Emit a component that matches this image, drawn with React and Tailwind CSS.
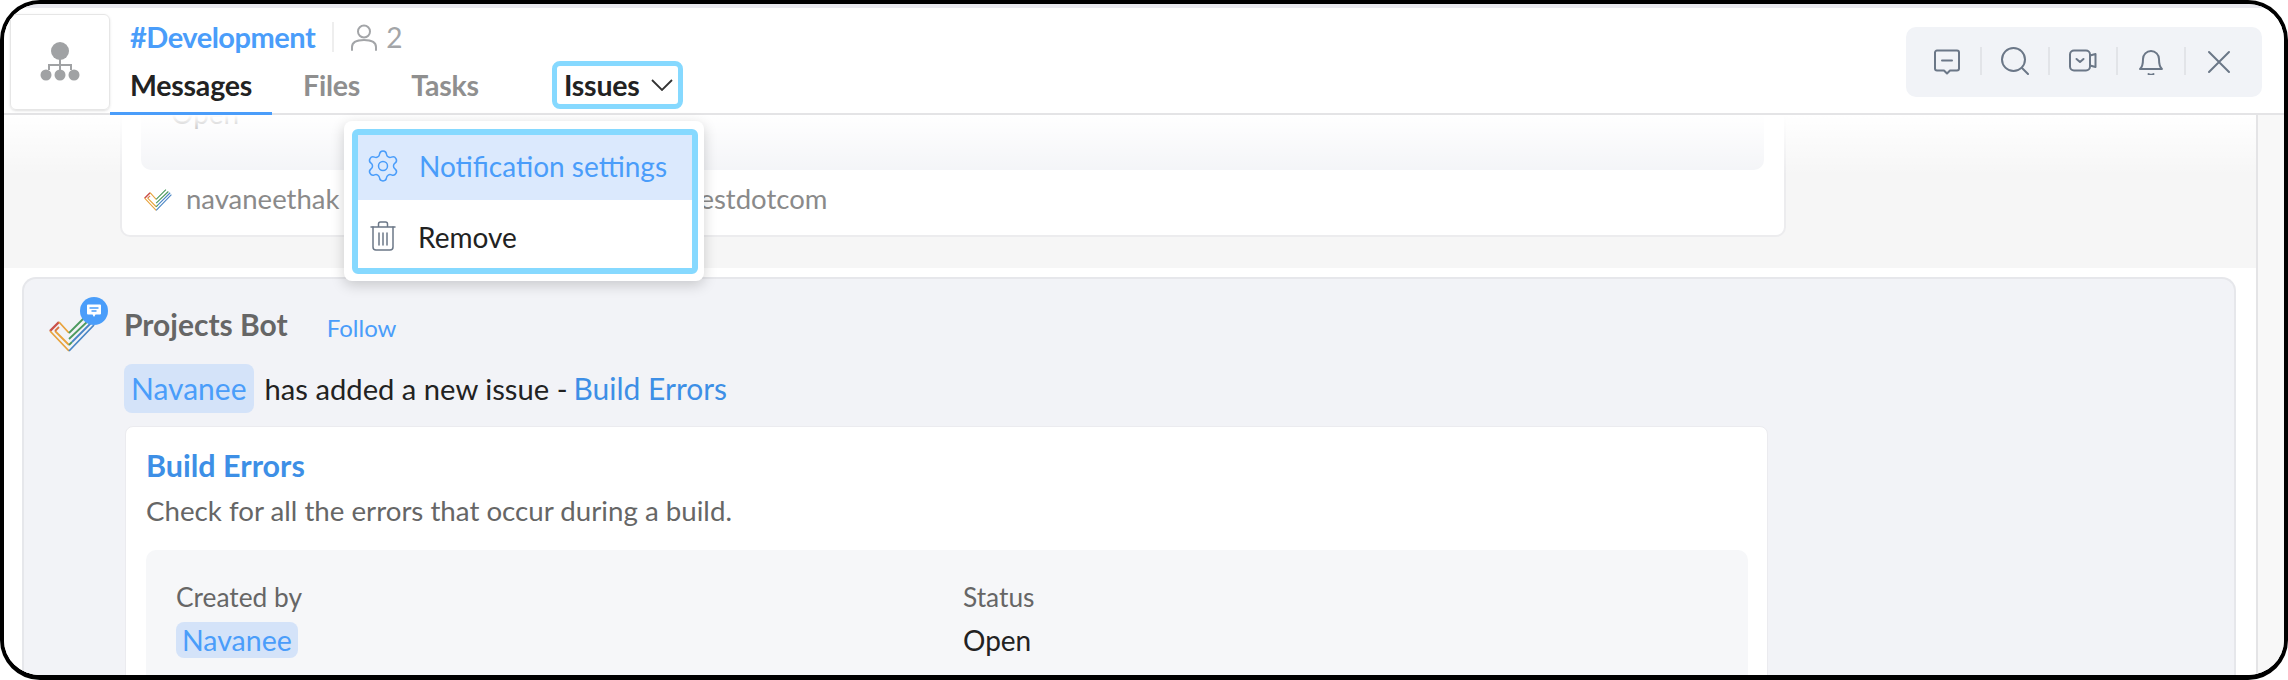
import { Settings } from "lucide-react";

function CheckLogo({ className }) {
  return (
    <svg viewBox="0 0 46 46" fill="none" strokeWidth="1.8" className={className}>
      <path d="M1 25L10 16" stroke="#c9504a" strokeWidth="2.4" />
      <path d="M1 25L20 45M10 16L20 27M6 25L20 39" stroke="#e8a33d" />
      <path d="M6 25L10 21" stroke="#d9763f" />
      <path d="M20 27L36 11M20 33L40 14" stroke="#4c9a5e" />
      <path d="M20 39L23 36" stroke="#4c9a5e" />
      <path d="M20 45L45 19M23 36L43 16" stroke="#4a86c5" />
    </svg>
  );
}

function OrgIcon() {
  return (
    <svg viewBox="0 0 40 40" className="h-[40px] w-[40px]" fill="#a0a2a4">
      <circle cx="20" cy="9" r="9" />
      <path d="M19 16h2v6h11v6h-2v-4H21v4h-2v-4H10v4H8v-6h11z" />
      <circle cx="6" cy="33" r="5.5" />
      <circle cx="20" cy="33" r="5.5" />
      <circle cx="34" cy="33" r="5.5" />
    </svg>
  );
}

const toolIcons = [
  <svg key="chat" viewBox="0 0 28 28" className="h-[28px] w-[28px]" fill="none" stroke="#6b7787" strokeWidth="2" strokeLinejoin="round">
    <path d="M2 5.500a2 2 0 0 1 2-2h20a2 2 0 0 1 2 2v16a2 2 0 0 1-2 2h-7l-3 3-3-3H4a2 2 0 0 1-2-2z" />
    <path d="M9 13.500h10" strokeLinecap="round" />
  </svg>,
  <svg key="search" viewBox="0 0 28 28" className="h-[28px] w-[28px]" fill="none" stroke="#6b7787" strokeWidth="2" strokeLinecap="round">
    <circle cx="12.500" cy="12.500" r="11.500" />
    <path d="M21 21l6 6" />
  </svg>,
  <svg key="video" viewBox="0 0 28 28" className="h-[28px] w-[28px]" fill="none" stroke="#6b7787" strokeWidth="2" strokeLinejoin="round" strokeLinecap="round">
    <rect x="1" y="3.500" width="20" height="20" rx="4" />
    <path d="M21 8.500l5.500-1.500v13l-5.500-1.500" />
    <path d="M7.500 12l3.500 3 3.500-3" />
  </svg>,
  <svg key="bell" viewBox="0 0 28 28" className="h-[28px] w-[28px]" fill="none" stroke="#6b7787" strokeWidth="2" strokeLinejoin="round" strokeLinecap="round">
    <path d="M3 22c2.500-2 3-5 3-10a8 8 0 0 1 16 0c0 5 .5 8 3 10z" />
    <path d="M11.500 27c1.500 1 3.500 1 5 0" />
  </svg>,
  <svg key="close" viewBox="0 0 28 28" className="h-[28px] w-[28px]" fill="none" stroke="#6b7787" strokeWidth="2" strokeLinecap="round">
    <path d="M4 5l20 20M24 5L4 25" />
  </svg>,
];

function Header() {
  return (
    <div className="relative flex h-[107px] items-start border-b-2 border-[#e4e4e6] bg-white">
      <div className="ml-[6px] mt-[6px] flex h-[96px] w-[100px] items-center justify-center rounded-[6px] border border-[#e6e6e6] shadow-sm">
        <OrgIcon />
      </div>
      <div className="flex h-full flex-col">
        <div className="ml-[20px] mt-[11px] flex h-[36px] items-center">
          <span className="text-[29px] font-bold tracking-[-0.5px] text-[#4a9dfa]">#Development</span>
          <span className="ml-[17px] h-[30px] w-[2px] bg-[#eeeeee]" />
          <svg viewBox="0 0 28 28" className="ml-[16px] h-[28px] w-[28px]" fill="none" stroke="#a3a5a8" strokeWidth="2" strokeLinecap="round">
            <circle cx="14" cy="8.500" r="6" />
            <path d="M2 27v-3c0-4 4-7 12-7s12 3 12 7v3" />
          </svg>
          <span className="ml-[8px] text-[28px] text-[#a3a5a8]">2</span>
        </div>
        <div className="mt-[4px] flex items-start">
          <div className="flex h-[57px] w-[162px] items-center justify-center border-b-[4px] border-[#4a9dfa] text-[28.500px] font-bold tracking-[-0.2px] text-[#222222]">
            Messages
          </div>
          <div className="ml-[31px] flex h-[53px] items-center text-[28.500px] font-bold tracking-[-0.2px] text-[#8f8f8f]">Files</div>
          <div className="ml-[51px] flex h-[53px] items-center text-[28.500px] font-bold tracking-[-0.2px] text-[#8f8f8f]">Tasks</div>
          <div className="ml-[73px] mt-[2px] flex h-[48px] w-[131px] items-center rounded-[8px] border-[5px] border-[#86d9ff] pl-[7px] text-[28.500px] font-bold tracking-[-0.2px] text-[#222222]">
            Issues
            <svg viewBox="0 0 22 12" className="ml-[11px] h-[12px] w-[22px]" fill="none" stroke="#333333" strokeWidth="1.800">
              <path d="M1 1l10 10L21 1" />
            </svg>
          </div>
        </div>
      </div>
      <div className="ml-auto mr-[22px] mt-[19px] flex h-[70px] w-[356px] items-center rounded-[10px] bg-[#f1f3f7] pl-[8px]">
        {toolIcons.map((icon, i) => (
          <div key={i} className="flex items-center">
            <div className="flex w-[66px] justify-center pb-[3px]">{icon}</div>
            {i < toolIcons.length - 1 && <div className="mb-[2px] h-[28px] w-[2px] bg-[#e2e4e8]" />}
          </div>
        ))}
      </div>
    </div>
  );
}

function PreviousMessage() {
  return (
    <div className="relative flex h-[153px] flex-col justify-end overflow-hidden bg-[#f6f6f6] pb-[31px] pl-[116px]">
      <div className="h-[200px] w-[1666px] shrink-0 rounded-[10px] border-2 border-[#ececee] bg-white pl-[19px] pr-[20px]">
        <div className="flex h-[131px] flex-col justify-end rounded-[10px] bg-[#f3f4f7] pb-[36px] pl-[30px] text-[28px] text-[#222222]">
          Open
        </div>
        <div className="ml-[3px] mt-[14px] flex h-[30px] items-center text-[27.500px] text-[#8a8a8a]">
          <CheckLogo className="mb-[5px] mr-[14px] h-[28px] w-[28px]" />
          navaneethak
          <span className="ml-[360px]">estdotcom</span>
        </div>
      </div>
      <div className="absolute inset-x-0 top-0 h-[60px] bg-gradient-to-b from-white to-transparent" />
    </div>
  );
}

function IssueMessage() {
  return (
    <div className="bg-white pl-[18px] pr-[20px] pt-[9px]">
      <div className="flex h-[500px] rounded-t-[14px] border-2 border-b-0 border-[#e6e7eb] bg-[#f2f3f7]">
        <div className="relative w-[100px] shrink-0">
          <CheckLogo className="absolute left-[25px] top-[27px] h-[46px] w-[46px]" />
          <div className="absolute left-[56px] top-[18px] flex h-[28px] w-[28px] items-center justify-center rounded-full bg-[#4a9dfa]">
            <svg viewBox="0 0 16 16" className="h-[16px] w-[16px]">
              <path d="M1 2.500a1 1 0 0 1 1-1h12a1 1 0 0 1 1 1v8a1 1 0 0 1-1 1h-4.500L8 14l-1.500-2.500H2a1 1 0 0 1-1-1z" fill="white" />
              <path d="M3.500 5h9M5.500 8h5" stroke="#4a9dfa" strokeWidth="1.300" />
            </svg>
          </div>
        </div>
        <div>
          <div className="mt-[25px] flex h-[40px] items-center">
            <span className="text-[30px] font-bold text-[#666666]">Projects Bot</span>
            <span className="ml-[39px] pt-[8px] text-[24px] text-[#4a9dfa]">Follow</span>
          </div>
          <div className="mt-[20px] flex h-[49px] items-center text-[29.200px] text-[#222222]">
            <span className="flex h-full items-center rounded-[8px] bg-[#d4e3f9] px-[7px] text-[30px] text-[#4a9dfa]">Navanee</span>
            <span className="ml-[11px]">has added a new issue -</span>
            <span className="ml-[6px] text-[30px] text-[#3d8fe6]">Build Errors</span>
          </div>
          <div className="ml-[1px] mt-[13px] h-[300px] w-[1643px] rounded-[8px] border border-[#ebebef] bg-white pl-[20px]">
            <div className="mt-[20px] text-[30.500px] font-bold leading-[36px] text-[#3d8fe6]">Build Errors</div>
            <div className="mt-[10px] text-[27.700px] leading-[36px] text-[#666666]">Check for all the errors that occur during a build.</div>
            <div className="mt-[21px] flex h-[200px] w-[1602px] rounded-[10px] bg-[#f6f7f9] pl-[30px] pt-[32px]">
              <div className="w-[787px]">
                <div className="text-[26.300px] leading-[30px] text-[#666666]">Created by</div>
                <div className="mt-[10px] inline-flex h-[36px] items-center rounded-[8px] bg-[#d4e3f9] px-[6px] text-[28.500px] text-[#4a9dfa]">Navanee</div>
              </div>
              <div>
                <div className="text-[26.300px] leading-[30px] text-[#666666]">Status</div>
                <div className="mt-[10px] flex h-[36px] items-center text-[28px] text-[#222222]">Open</div>
              </div>
            </div>
          </div>
        </div>
      </div>
    </div>
  );
}

function MenuDropdown() {
  return (
    <div className="absolute left-[340px] top-[117px] h-[160px] w-[360px] rounded-[8px] bg-white p-[8px] shadow-[0_4px_14px_rgba(0,0,0,0.18)]">
      <div className="h-[145px] w-[346px] rounded-[6px] border-[6px] border-[#86d9ff] text-[28px]">
        <div className="flex h-[65px] items-center bg-[#dbe9fd] pb-[3px] pl-[7px] text-[#4a9dfa]">
          <Settings className="h-[36px] w-[36px]" strokeWidth={1} />
          <span className="ml-[18px]">Notification settings</span>
        </div>
        <div className="flex h-[68px] items-center pl-[8px] pt-[4px] text-[#222222]">
          <svg viewBox="0 0 34 34" className="h-[34px] w-[34px]" fill="none" stroke="#6b7787" strokeWidth="1.500" strokeLinecap="round" strokeLinejoin="round">
            <path d="M5 8h24M12.500 8V5a2 2 0 0 1 2-2h5a2 2 0 0 1 2 2v3" />
            <path d="M7 8v20a3 3 0 0 0 3 3h14a3 3 0 0 0 3-3V8" />
            <path d="M13 14v12M17 14v12M21 14v12" />
          </svg>
          <span className="ml-[18px] pt-[1px]">Remove</span>
        </div>
      </div>
    </div>
  );
}

export default function App() {
  return (
    <div className="h-[680px] w-[2288px] overflow-hidden bg-white font-['Lato',sans-serif]">
      <div className="relative h-full overflow-hidden rounded-[40px] border-x-4 border-b-[5px] border-t-4 border-black">
        <div className="h-[4px] bg-[#e9e9ef]" />
        <Header />
        <div className="flex h-[560px]">
          <div className="w-[2252px] shrink-0">
            <PreviousMessage />
            <IssueMessage />
          </div>
          <div className="flex-1 border-l-2 border-[#e4e4e6] bg-[#f8f8f8]" />
        </div>
        <MenuDropdown />
      </div>
    </div>
  );
}
